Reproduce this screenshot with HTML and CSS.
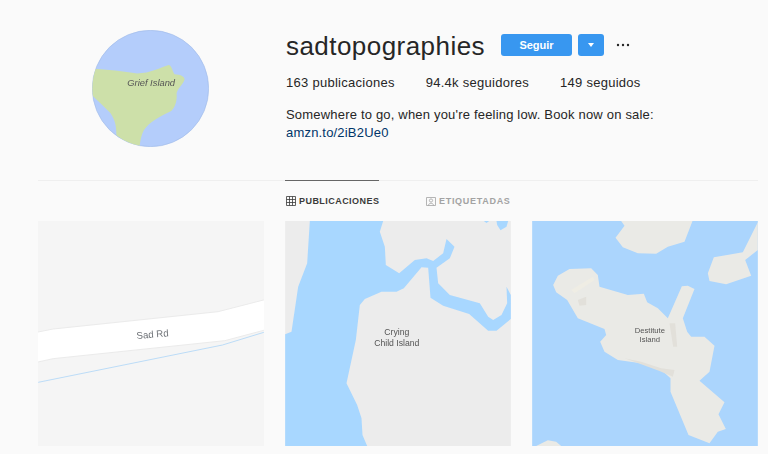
FILE: index.html
```html
<!DOCTYPE html>
<html lang="en">
<head>
    <meta charset="UTF-8">
    <meta name="viewport" content="width=device-width, initial-scale=1.0">
    <title>sadtopographies</title>
    <link rel="stylesheet" href="styles.css">
</head>
<body>
    <div class="page">
        <div class="profile">
            <div class="avatar-col">
                <svg class="avatar" viewBox="95 60 350 350">
                    <defs>
                        <clipPath id="disc"><circle cx="270" cy="235" r="174"/></clipPath>
                    </defs>
                    <circle cx="270" cy="235" r="174" fill="#b4cdfb" stroke="#a3bde8" stroke-width="2"/>
                    <path clip-path="url(#disc)" fill="#cde0a9" d="M90 177 C130 176 190 184 230 190 C270 190 300 172 325 165 C335 168 335 185 342 192 C358 193 372 197 372 208 C368 222 350 235 348 250 C350 270 345 290 332 302 C300 318 265 335 250 360 C242 375 240 390 237 410 C215 405 190 392 168 375 C168 350 165 330 150 308 C130 288 110 270 90 250 Z"/>
                    <text class="avatar-label" x="272" y="227">Grief Island</text>
                </svg>
            </div>
            <div class="info">
                <div class="title-row">
                    <h1 class="username">sadtopographies</h1>
                    <button class="btn btn-follow">Seguir</button>
                    <button class="btn btn-more"><span class="caret"></span></button>
                    <svg class="dots" viewBox="0 0 14 4"><circle cx="2" cy="2" r="1.2"/><circle cx="7" cy="2" r="1.2"/><circle cx="12" cy="2" r="1.2"/></svg>
                </div>
                <ul class="stats">
                    <li>163 publicaciones</li>
                    <li>94.4k seguidores</li>
                    <li>149 seguidos</li>
                </ul>
                <p class="bio">Somewhere to go, when you're feeling low. Book now on sale:<br><a href="#">amzn.to/2iB2Ue0</a></p>
            </div>
        </div>

        <div class="tabs">
            <div class="tab active">
                <svg class="tab-icon" viewBox="0 0 10 10"><path d="M.5.5h9v9h-9zM3.5.5v9M6.5.5v9M.5 3.5h9M.5 6.5h9"/></svg>
                PUBLICACIONES
            </div>
            <div class="tab">
                <svg class="tab-icon" viewBox="0 0 10 10"><path d="M.5 1.5h9v8h-9z"/><circle cx="5" cy="4.5" r="1.6"/><path d="M2.5 9.5c0-3 5-3 5 0"/></svg>
                ETIQUETADAS
            </div>
        </div>

        <div class="grid">
            <svg class="tile" viewBox="25 18 677 675">
                <rect x="25" y="18" width="677" height="675" fill="#f5f5f5"/>
                <path fill="#fff" stroke="#ebebeb" stroke-width="3" d="M20 352 L70 342 L565 290 L705 254 L705 345 L585 377 L70 431 L20 442 Z"/>
                <path fill="none" stroke="#bcdcf7" stroke-width="3" d="M25 502 L578 390 L702 352"/>
                <text class="road-label" transform="rotate(-5 368 357)" x="368" y="368">Sad Rd</text>
            </svg>

            <svg class="tile" viewBox="16 18 677 675">
                <rect x="16" y="18" width="677" height="675" fill="#ececec"/>
                <path fill="#a8d7ff" d="M90 18 L310 18 L300 50 L315 95 L318 150 L358 175 L405 135 L440 130 L460 138 L490 115 L500 72 L524 95 L510 130 L470 158 L475 205 L510 240 L600 265 L625 305 L640 315 L665 300 L682 265 L680 215 L693 240 L693 312 L650 347 L625 347 L568 297 L490 272 L452 248 L445 158 L425 157 L372 220 L350 230 L305 230 L255 252 L240 270 L228 375 L200 505 L232 570 L245 610 L248 660 L262 693 L16 693 L16 358 L35 350 L55 215 L82 145 Z"/>
                <path fill="#a8d7ff" d="M612 18 L628 18 L620 24 Z M650 18 L685 18 L680 35 L662 46 L652 30 Z"/>
                <text class="map-label" x="351" y="361">Crying</text>
                <text class="map-label" x="351" y="394">Child Island</text>
            </svg>

            <svg class="tile" viewBox="13 18 677 675">
                <rect x="13" y="18" width="677" height="675" fill="#abd5fd"/>
                <g fill="#eaeae6">
                    <path d="M280 18 L494 18 L470 80 L420 95 L385 116 L330 115 L285 97 L263 68 L290 32 Z"/>
                    <path d="M690 22 L690 105 L652 135 L670 182 L595 208 L545 198 L540 175 L558 127 L645 112 Z"/>
                    <path d="M76 210 L90 182 L125 162 L190 160 L210 180 L215 215 L300 240 L348 236 L358 262 L390 280 L420 310 L462 214 L480 212 L500 222 L465 310 L478 350 L490 365 L530 365 L560 392 L545 470 L515 497 L590 562 L572 598 L594 642 L570 650 L545 685 L482 660 L428 530 L428 490 L395 460 L340 445 L270 435 L230 410 L217 380 L235 360 L230 342 L150 310 L118 255 L85 232 Z"/>
                    <path d="M25 693 L60 676 L85 680 L100 693 Z"/>
                </g>
                <g fill="#e2e0da">
                    <path d="M150 255 L175 245 L175 270 L155 272 Z"/>
                    <path d="M290 430 L340 440 L400 460 L440 465 L435 485 L395 468 L340 448 Z"/>
                    <path d="M425 325 L442 325 L448 395 L436 395 Z"/>
                </g>
                <path fill="#efede4" d="M130 225 L195 185 L200 195 L140 235 Z"/>
                <text class="map-label small" x="366" y="355">Destitute</text>
                <text class="map-label small" x="366" y="382">Island</text>
            </svg>
        </div>
    </div>
</body>
</html>
```

FILE: styles.css
```css
html, body { margin: 0; padding: 0; background: #fafafa; height: 454px; overflow: hidden; }
body { font-family: "Liberation Sans", Arial, sans-serif; color: #262626; }
.page { width: 720px; margin-left: 38px; }

.profile { display: flex; height: 181px; box-sizing: border-box; border-bottom: 1px solid #efefef; }
.avatar-col { width: 248px; padding: 30px 0 0 54px; box-sizing: border-box; }
.avatar { display: block; width: 117px; height: 117px; filter: blur(.3px); }
.avatar-label { font-size: 28px; font-style: italic; text-anchor: middle; fill: #555; }

.info { flex: 1; padding-top: 29px; }
.title-row { display: flex; align-items: center; height: 34px; }
.username { margin: 0 16px 0 0; font-size: 26px; font-weight: 400; line-height: 34px; letter-spacing: .45px; color: #262626; }
.btn { border: 0; border-radius: 3px; background: #3897f0; color: #fff; height: 22px; padding: 0; font-family: inherit; font-size: 11px; font-weight: 700; display: flex; align-items: center; justify-content: center; position: relative; top: -1px; }
.btn-follow { width: 71px; }
.btn-more { width: 26px; margin-left: 6px; }
.caret { width: 0; height: 0; border-left: 3px solid transparent; border-right: 3px solid transparent; border-top: 4px solid #fff; }
.dots { width: 14px; height: 4px; margin-left: 12px; fill: #262626; position: relative; top: -1px; }

.stats { display: flex; list-style: none; margin: 11px 0 0; padding: 0; font-size: 13px; line-height: 18px; letter-spacing: .27px; }
.stats li { margin-right: 31px; }
.bio { margin: 14px 0 0; font-size: 13px; line-height: 18px; letter-spacing: .19px; }
.bio a { color: #003569; text-decoration: none; }

.tabs { display: flex; margin-left: 247px; height: 40px; }
.tab { display: flex; align-items: center; gap: 3px; width: 94px; margin: -1px 46px 0 0; padding-left: 1px; box-sizing: border-box; font-size: 9px; font-weight: 700; letter-spacing: .7px; color: #a3a3a3; border-top: 1px solid transparent; white-space: nowrap; }
.tab.active { color: #3a3a3a; border-top-color: #666; letter-spacing: .45px; }
.tab-icon { width: 10px; height: 10px; fill: none; stroke: currentColor; stroke-width: .8; flex: none; }

.grid { display: grid; grid-template-columns: repeat(3, 226px); gap: 21px; }
.tile { display: block; width: 226px; height: 225px; filter: blur(.3px); }
.road-label { font-size: 29px; text-anchor: middle; fill: #6f7378; }
.map-label { font-size: 26px; text-anchor: middle; fill: #555; }
.map-label.small { font-size: 23px; }
```
